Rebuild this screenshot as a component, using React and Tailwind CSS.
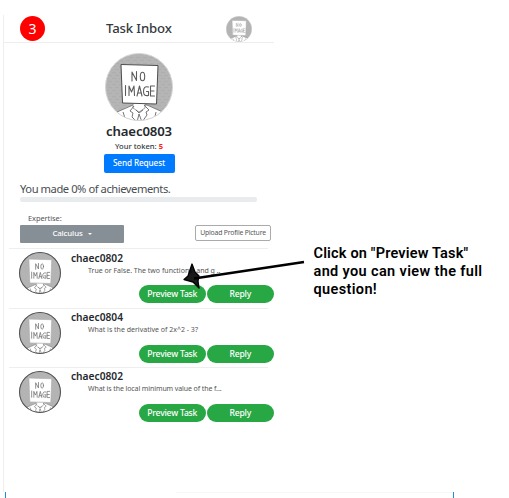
import React from "react";

function Avatar({ className, ring = "#d4d4d4", ringWidth = 1, paper = "#4d4d4d", ink = 1.1, inkColor = "#5c5c5c" }) {
  return (
    <svg viewBox="0 0 68 68" className={className}>
      <defs>
        <clipPath id="face">
          <circle cx="34" cy="34" r="33.5" />
        </clipPath>
        <pattern id="grain" width="7" height="6" patternUnits="userSpaceOnUse">
          <rect width="7" height="6" fill="#b5b5b5" />
          <path d="M0 2q2-2 4 0M3 5q2-2 4 0" stroke="#a9a9a9" strokeWidth=".8" fill="none" />
        </pattern>
      </defs>
      <g clipPath="url(#face)">
        <rect width="68" height="68" fill="url(#grain)" />
        <path d="M12 59 28 52h14l18 8v10H8z" fill="#fff" stroke="#777" strokeWidth=".9" />
        <path d="M28 50v5l6 4 6-4v-5z" fill="#fff" stroke="#888" strokeWidth=".8" />
        <path d="m29 53-4 5 3 2-1 4 5 5 2-8 3 8 5-7-1-3 3-2-5-5M31 57l3 3 4-3M18 59l3 9M51 59l-2 9" fill="none" stroke="#666" strokeWidth=".9" />
        <path d="M16 11.500 53 12.500 51.500 51 17.500 50z" fill="#fff" stroke={paper} strokeWidth="1" />
        <g fill="none" stroke={inkColor} strokeWidth={ink} strokeLinecap="round" strokeLinejoin="round">
          <path d="M27 28v-9l4.500 8.500v-9" />
          <ellipse cx="37.500" cy="23.500" rx="2.200" ry="4.300" />
          <path d="M20.500 32.500v10M24 42.500v-9.500l2.500 6 2.500-6 .5 9.500M32 43l2.500-10 2.500 10M33 40h3.500M43.500 34q-5-1.500-5 4.500 0 5 5 4v-4h-2M49.500 33h-4v10h4M45.500 38h3.500" />
        </g>
      </g>
      <circle cx="34" cy="34" r={34 - ringWidth / 2} fill="none" stroke={ring} strokeWidth={ringWidth} />
    </svg>
  );
}

const tasks = [
  { name: "chaec0802", text: "True or False. The two functions  and g ..", height: "h-[59.5px]", tracking: "tracking-normal" },
  { name: "chaec0804", text: "What is the derivative of 2x^2 - 3?", height: "h-[59px]", tracking: "tracking-normal" },
  { name: "chaec0802", text: "What is the local minimum value of the f...", height: "h-[122px]", tracking: "tracking-[-0.1px]" },
];

function Task({ name, text, height, tracking }) {
  return (
    <div className={`flex flex-col ${height}`}>
      <div className="ml-[5px] h-px w-[259px] shrink-0 bg-[#eeeeee]" />
      <div className="flex pl-[15px]">
        <Avatar className="mt-[3px] size-[42px] shrink-0" ring="#505050" ringWidth={1.7} paper="#aaa" ink={1.3} inkColor="#777" />
        <div className="ml-[10px] w-[203px] shrink-0 pt-[2.5px]">
          <div className="h-[14px] text-[10.2px] font-semibold leading-[12px] text-[#25292d]">{name}</div>
          <div className={`h-[19.5px] whitespace-pre pl-[17px] text-[7px] leading-[9px] text-[#555] ${tracking}`}>{text}</div>
          <div className="ml-[68px] flex gap-[1.5px] text-[8.6px] font-medium leading-[18px] tracking-[-0.2px] text-white">
            <button className="h-[18px] w-[66.5px] rounded-full bg-[#28a745]">Preview Task</button>
            <button className="h-[18px] w-[66.5px] rounded-full bg-[#28a745]">Reply</button>
          </div>
        </div>
      </div>
    </div>
  );
}

export default function App() {
  return (
    <div className="relative h-[498px] w-[509px] overflow-hidden bg-white pt-[15px] font-['Noto_Sans',sans-serif] text-[#343a40]">
      <div className="ml-[3px] flex h-[477px] w-[271px] flex-col border-l border-[#eeeeee]">
        <header className="flex h-[28px] shrink-0 items-center border-b border-[#eceef0]">
          <div className="ml-[16px] flex size-[25px] shrink-0 items-center justify-center rounded-full bg-[#ff0000] text-[14px] text-white">3</div>
          <h1 className="ml-[61px] w-[67px] shrink-0 whitespace-nowrap pb-[2px] text-[13.2px] font-medium leading-[20px] tracking-[-0.15px]">Task Inbox</h1>
          <Avatar className="ml-[53px] size-[26px] shrink-0" paper="#aaa" inkColor="#888" />
        </header>
        <section className="flex h-[131px] shrink-0 flex-col items-center">
          <Avatar className="mt-[10px] size-[68px] shrink-0" />
          <div className="mt-[2px] text-[13.2px] font-semibold leading-[16px] tracking-[-0.15px] text-[#25292d]">chaec0803</div>
          <div className="mt-[2px] text-[7.6px] font-medium leading-[11px]">
            Your token: <span className="font-bold text-[#ff2020]">5</span>
          </div>
          <button className="mt-[2px] h-[19px] w-[71px] shrink-0 rounded-[2px] bg-[#007bff] text-[8.2px] font-medium tracking-[-0.1px] text-white">Send Request</button>
        </section>
        <section className="h-[74px] shrink-0 pl-[16px]">
          <div className="mt-[6px] text-[11.2px] leading-[17px] tracking-[-0.45px] text-[#4a4e52]">You made 0% of achievements.</div>
          <div className="h-[5px] w-[237px] rounded-[2px] bg-[#e9ecef]" />
          <div className="flex items-end">
            <div className="w-[104px] pt-[11px]">
              <div className="pl-[8px] text-[7.5px] leading-[10px] tracking-[-0.1px] text-[#555]">Expertise:</div>
              <button className="mt-[2px] flex h-[18px] w-[104px] items-center justify-center gap-[5px] rounded-[1px] bg-[#868e96] text-[7.8px] font-medium tracking-[-0.1px] text-white">
                Calculus
                <span className="border-x-2 border-t-2 border-x-transparent border-t-white" />
              </button>
            </div>
            <button className="mb-[2px] ml-[71px] h-[16px] w-[76px] whitespace-nowrap rounded-[2px] border border-[#aaa] text-[6.8px] leading-[14px] tracking-[-0.17px] text-[#555]">
              Upload Profile Picture
            </button>
          </div>
        </section>
        {tasks.map((task, i) => (
          <Task key={i} {...task} />
        ))}
      </div>
      <div className="ml-[5px] flex h-[6px] w-[449px] items-start justify-between">
        <span className="h-full w-px bg-[#218bd2]" />
        <span className="ml-auto h-px w-[277px] bg-[#f7f7f7]" />
        <span className="h-full w-px bg-[#218bd2]" />
      </div>
      <svg className="absolute left-[180px] top-[255px] h-[40px] w-[130px]" viewBox="180 255 130 40">
        <path d="M304 262 194 278.500" stroke="#000" strokeWidth="2.600" />
        <path d="M184 279.500 188 276 190 270 192 264 195 272 199 276 198 281 199 288 193 282z" fill="#000" fillOpacity=".9" stroke="#000" strokeWidth="1.300" strokeLinejoin="round" />
      </svg>
      <p className="absolute left-[313.5px] top-[245px] whitespace-nowrap font-['Roboto',sans-serif] text-[14.5px] font-semibold leading-[18px] tracking-[0.36px] text-black">
        <span className="tracking-[0.18px]">Click on "Preview Task"</span>
        <br />
        and you can view the full
        <br />
        question!
      </p>
    </div>
  );
}
